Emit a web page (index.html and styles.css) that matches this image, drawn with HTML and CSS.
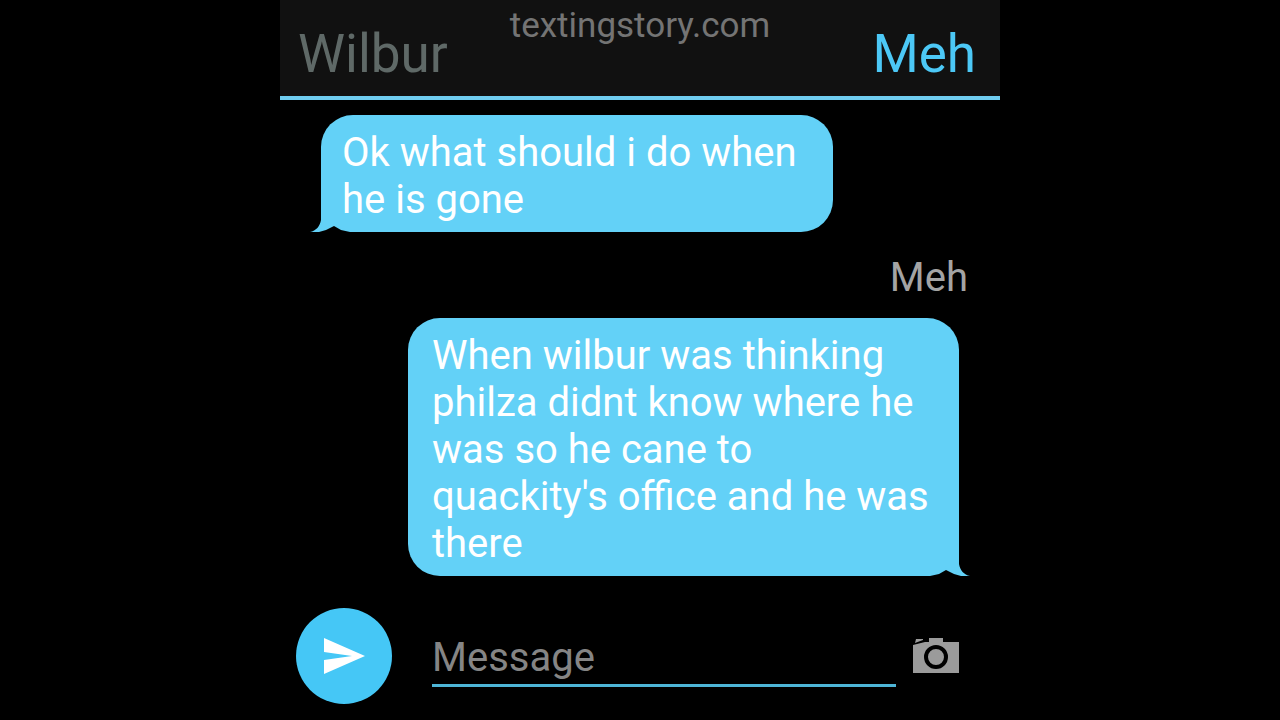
FILE: index.html
```html
<!DOCTYPE html>
<html lang="en">
	<head>
		<meta charset="utf-8" />
		<meta name="viewport" content="width=device-width, initial-scale=1.0" />
		<title>textingstory.com</title>
		<link rel="stylesheet" href="styles.css" />
	</head>

	<body>
		<div class="app">
			<header class="topbar">
				<button class="name" type="button">Wilbur</button>
				<a class="site" href="#">textingstory.com</a>
				<button class="name active" type="button">Meh</button>
			</header>

			<main class="chat">
				<div class="bubble left">
					<p>Ok what should i do when he is gone</p>
					<svg class="tail" viewBox="0 0 40 12" aria-hidden="true">
						<path class="tail-fill" d="M11 0C10 6 6 11 0 12H12V0z" />
						<path class="tail-cut" d="M9 12L16 10L24 6L31 10L40 12z" />
					</svg>
				</div>

				<h2 class="sender">Meh</h2>

				<div class="bubble right">
					<p>
						When wilbur was thinking philza didnt know where he was so he cane
						to quackity's office and he was there
					</p>
					<svg class="tail" viewBox="0 0 40 12" aria-hidden="true">
						<path class="tail-fill" d="M11 0C10 6 6 11 0 12H12V0z" />
						<path class="tail-cut" d="M9 12L16 10L24 6L31 10L40 12z" />
					</svg>
				</div>
			</main>

			<form class="composer">
				<button class="send" type="button" aria-label="Send">
					<svg viewBox="0 0 42 36" aria-hidden="true">
						<path d="M1 0L42 18L1 36V22L29 18L1 14z" />
					</svg>
				</button>
				<input class="message" type="text" placeholder="Message" aria-label="Message" />
				<button class="camera" type="button" aria-label="Camera">
					<svg viewBox="0 0 46 36" aria-hidden="true">
						<path class="body" d="M3 1H10V2L2 5zM0 7L12 4H16V0H30V4H46V35H0z" />
						<circle class="lens" cx="23" cy="19" r="10" />
					</svg>
				</button>
			</form>
		</div>
	</body>
</html>
```

FILE: styles.css
```css
* {
	box-sizing: border-box;
}

body {
	margin: 0;
	background: #000;
	color: #fff;
	font-family: Roboto, sans-serif;
}

button {
	padding: 0;
	border: none;
	background: none;
	font-family: inherit;
	cursor: pointer;
}

.app {
	display: flex;
	flex-direction: column;
	max-width: 720px;
	min-height: 100vh;
	margin: 0 auto;
}

.topbar {
	display: grid;
	grid-template-columns: 1fr auto 1fr;
	padding: 4px 18px 0;
	border-bottom: 4px solid #6fcdf0;
	background: #111;
}

.name {
	justify-self: start;
	padding: 20px 0 12px;
	color: #5f6967;
	font-size: 53px;
	line-height: 60px;
}

.name.active {
	justify-self: end;
	margin-right: 6px;
	color: #4cc8f6;
}

.site {
	color: #747474;
	font-size: 35px;
	line-height: 44px;
	text-decoration: none;
}

.chat {
	display: flex;
	flex: 1;
	flex-direction: column;
	padding: 15px 41px;
}

.bubble {
	position: relative;
	width: 100%;
	padding: 14px 24px 9px;
	border-radius: 32px;
	background: #63d1f7;
	font-size: 40px;
	line-height: 47px;
}

.bubble p {
	margin: 0;
}

.left {
	align-self: flex-start;
	max-width: 512px;
	padding-left: 21px;
	border-bottom-left-radius: 0;
}

.right {
	align-self: flex-end;
	max-width: 551px;
	border-bottom-right-radius: 0;
}

/* the tail hangs outside the bubble, at its bottom corner */
.tail {
	position: absolute;
	bottom: 0;
	left: -11px;
	width: 40px;
	height: 12px;
}

.right .tail {
	right: -11px;
	left: auto;
	transform: scaleX(-1);
}

.tail-fill {
	fill: #63d1f7;
}

.tail-cut {
	fill: #000;
}

.sender {
	align-self: flex-end;
	margin: 22px -9px 17px 0;
	color: #a4a4a4;
	font-size: 40px;
	font-weight: 400;
	line-height: 47px;
}

.composer {
	display: flex;
	align-items: center;
	padding: 16px 41px 16px 16px;
}

.send {
	display: flex;
	align-items: center;
	justify-content: center;
	width: 96px;
	height: 96px;
	border-radius: 50%;
	background: #45c7f6;
}

.send svg {
	width: 42px;
	height: 36px;
	fill: #fff;
}

.message {
	flex: 1;
	min-width: 0;
	margin: 0 17px 0 40px;
	padding: 9px 0 3px;
	border: none;
	border-bottom: 3px solid #4eb5d6;
	outline: none;
	background: none;
	color: #fff;
	font-family: inherit;
	font-size: 40px;
	line-height: 47px;
}

.message::placeholder {
	color: #858585;
	opacity: 1;
}

.camera svg {
	display: block;
	width: 46px;
	height: 36px;
}

.camera .body {
	fill: #9b9b9b;
}

.camera .lens {
	fill: none;
	stroke: #000;
	stroke-width: 4px;
}
```
